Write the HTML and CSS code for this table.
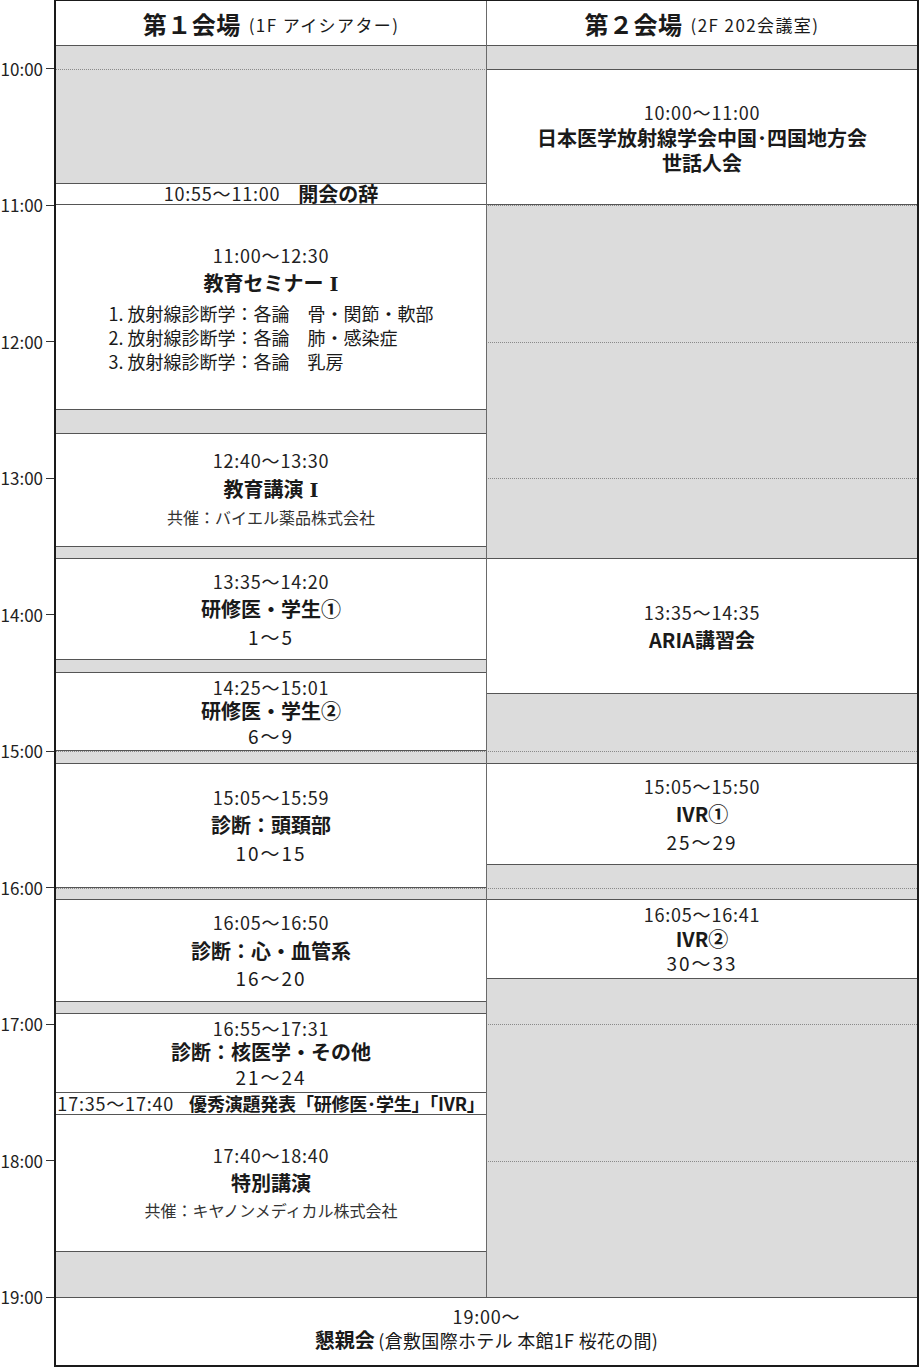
FILE: index.html
```html
<!DOCTYPE html>
<html lang="ja">
<head>
<meta charset="utf-8">
<title>プログラム</title>
<link rel="stylesheet" href="styles.css">
</head>
<body>
<div class="page">
  <div class="axis">
    <div class="hour" style="grid-row: 4">10:00<span class="tick"></span></div>
    <div class="hour" style="grid-row: 16">11:00<span class="tick"></span></div>
    <div class="hour" style="grid-row: 28">12:00<span class="tick"></span></div>
    <div class="hour" style="grid-row: 40">13:00<span class="tick"></span></div>
    <div class="hour" style="grid-row: 52">14:00<span class="tick"></span></div>
    <div class="hour" style="grid-row: 64">15:00<span class="tick"></span></div>
    <div class="hour" style="grid-row: 76">16:00<span class="tick"></span></div>
    <div class="hour" style="grid-row: 88">17:00<span class="tick"></span></div>
    <div class="hour" style="grid-row: 100">18:00<span class="tick"></span></div>
    <div class="hour" style="grid-row: 112">19:00<span class="tick"></span></div>
  </div>

  <div class="table">
    <div class="head col1"><span class="venue">第１会場</span><span class="place">(1F アイシアター)</span></div>
    <div class="head col2"><span class="venue">第２会場</span><span class="place">(2F 202会議室)</span></div>

    <div class="lane col1"></div>
    <div class="lane col2"></div>

    <div class="gridline" style="grid-row: 4"></div>
    <div class="gridline" style="grid-row: 16"></div>
    <div class="gridline" style="grid-row: 28"></div>
    <div class="gridline" style="grid-row: 40"></div>
    <div class="gridline" style="grid-row: 52"></div>
    <div class="gridline" style="grid-row: 64"></div>
    <div class="gridline" style="grid-row: 76"></div>
    <div class="gridline" style="grid-row: 88"></div>
    <div class="gridline" style="grid-row: 100"></div>

    <div class="event col1 inline" style="grid-row: 14 / 16">
      <span class="time">10:55～11:00</span><span class="title">開会の辞</span>
    </div>
    <div class="event col1 joined" style="grid-row: 16 / 34">
      <div class="time">11:00～12:30</div>
      <div class="title">教育セミナー<span class="roman">Ⅰ</span></div>
      <ol class="list">
        <li>1. 放射線診断学：各論　骨・関節・軟部</li>
        <li>2. 放射線診断学：各論　肺・感染症</li>
        <li>3. 放射線診断学：各論　乳房</li>
      </ol>
    </div>
    <div class="event col1" style="grid-row: 36 / 46">
      <div class="time">12:40～13:30</div>
      <div class="title">教育講演<span class="roman">Ⅰ</span></div>
      <div class="sub">共催：バイエル薬品株式会社</div>
    </div>
    <div class="event col1" style="grid-row: 47 / 56">
      <div class="time">13:35～14:20</div>
      <div class="title">研修医・学生①</div>
      <div class="nums">1～5</div>
    </div>
    <div class="event col1 compact" style="grid-row: 57 / 64">
      <div class="time">14:25～15:01</div>
      <div class="title">研修医・学生②</div>
      <div class="nums">6～9</div>
    </div>
    <div class="event col1" style="grid-row: 65 / 76">
      <div class="time">15:05～15:59</div>
      <div class="title">診断：頭頚部</div>
      <div class="nums">10～15</div>
    </div>
    <div class="event col1" style="grid-row: 77 / 86">
      <div class="time">16:05～16:50</div>
      <div class="title">診断：心・血管系</div>
      <div class="nums">16～20</div>
    </div>
    <div class="event col1 compact" style="grid-row: 87 / 94">
      <div class="time">16:55～17:31</div>
      <div class="title">診断：核医学・その他</div>
      <div class="nums">21～24</div>
    </div>
    <div class="event col1 inline award-row joined" style="grid-row: 94 / 96">
      <span class="time">17:35～17:40</span><span class="title award">優秀演題発表「研修医･学生」「IVR」</span>
    </div>
    <div class="event col1 joined" style="grid-row: 96 / 108">
      <div class="time">17:40～18:40</div>
      <div class="title">特別講演</div>
      <div class="sub">共催：キヤノンメディカル株式会社</div>
    </div>

    <div class="event col2 narrowlines" style="grid-row: 4 / 16">
      <div class="time">10:00～11:00</div>
      <div class="title">日本医学放射線学会中国･四国地方会<br>世話人会</div>
    </div>
    <div class="event col2" style="grid-row: 47 / 59">
      <div class="time">13:35～14:35</div>
      <div class="title">ARIA講習会</div>
    </div>
    <div class="event col2" style="grid-row: 65 / 74">
      <div class="time">15:05～15:50</div>
      <div class="title">IVR①</div>
      <div class="nums">25～29</div>
    </div>
    <div class="event col2 compact" style="grid-row: 77 / 84">
      <div class="time">16:05～16:41</div>
      <div class="title">IVR②</div>
      <div class="nums">30～33</div>
    </div>

    <div class="divider"></div>

    <div class="footer">
      <div class="time">19:00～</div>
      <div><span class="title">懇親会</span> <span class="place-lg">(倉敷国際ホテル 本館1F 桜花の間)</span></div>
    </div>
  </div>
</div>
</body>
</html>
```

FILE: styles.css
```css
:root {
  --slot: 11.3889px;
  --line: #555;
  --shade: #dcdcdc;
}

* {
  box-sizing: border-box;
}

html, body {
  margin: 0;
  padding: 0;
  background: #fff;
}

body {
  font-family: "Noto Sans CJK JP", "Noto Sans", sans-serif;
  color: #1a1a1a;
}

.page {
  display: flex;
  width: 920px;
  height: 1367px;
}

.axis {
  width: 54px;
  flex: none;
  display: grid;
  grid-template-rows: 46px repeat(110, var(--slot)) 68px;
}

.hour {
  grid-column: 1;
  align-self: start;
  height: 0;
  display: flex;
  align-items: center;
  justify-content: flex-end;
  gap: 3px;
  font-size: 17px;
  color: #222;
  line-height: 20px;
}

.tick {
  width: 8px;
  height: 1px;
  background: #333;
}

.table {
  width: 865px;
  flex: none;
  border: 2px solid #1a1a1a;
  border-top-width: 1px;
  display: grid;
  grid-template-columns: 430px 1px 430px;
  grid-template-rows: 45px repeat(110, var(--slot)) 66px;
}

.col1 { grid-column: 1; }
.col2 { grid-column: 3; }

.head {
  grid-row: 1;
  border-bottom: 1px solid var(--line);
  display: flex;
  align-items: center;
  justify-content: center;
  gap: 8px;
}

.venue {
  font-size: 24px;
  font-weight: 700;
  letter-spacing: 0.5px;
}

.place {
  font-size: 17px;
  letter-spacing: 1.4px;
  padding-top: 3px;
}

.lane {
  grid-row: 2 / 112;
  background: var(--shade);
}

.gridline {
  grid-column: 1 / -1;
  align-self: start;
  height: 1px;
  border-top: 1px dotted #8a8a8a;
}

.divider {
  grid-column: 2;
  grid-row: 1 / 112;
  background: #6a6a6a;
}

.event {
  background: #fff;
  border-top: 1px solid var(--line);
  border-bottom: 1px solid var(--line);
  display: flex;
  flex-direction: column;
  align-items: center;
  justify-content: center;
  text-align: center;
  line-height: 27.5px;
}

.event.joined { border-top: none; }
.event.compact { line-height: 24.5px; }

.event.inline {
  flex-direction: row;
  gap: 18px;
  line-height: 21px;
  white-space: nowrap;
}

.event.award-row { gap: 15px; }

.time {
  font-size: 18px;
  letter-spacing: 0.8px;
  color: #222;
}

.title {
  font-size: 20px;
  font-weight: 700;
}

.roman {
  font-family: "DejaVu Serif", "Liberation Serif", "Noto Sans CJK JP", serif;
  font-weight: 700;
  font-size: 19px;
  margin-left: 6px;
}

.narrowlines .title { line-height: 24.5px; }

.award {
  font-size: 18px;
  letter-spacing: -0.2px;
}

.nums {
  font-size: 19px;
  letter-spacing: 2px;
}

.sub {
  font-size: 16px;
  color: #333;
}

.list {
  list-style: none;
  margin: 2px 0 0;
  padding: 0;
  font-size: 18px;
  line-height: 24px;
  text-align: left;
}

.footer {
  grid-column: 1 / -1;
  grid-row: 112;
  border-top: 1px solid var(--line);
  display: flex;
  flex-direction: column;
  align-items: center;
  justify-content: center;
  line-height: 24px;
  padding-bottom: 4px;
}

.place-lg {
  font-size: 18px;
  letter-spacing: 0.3px;
}
```
